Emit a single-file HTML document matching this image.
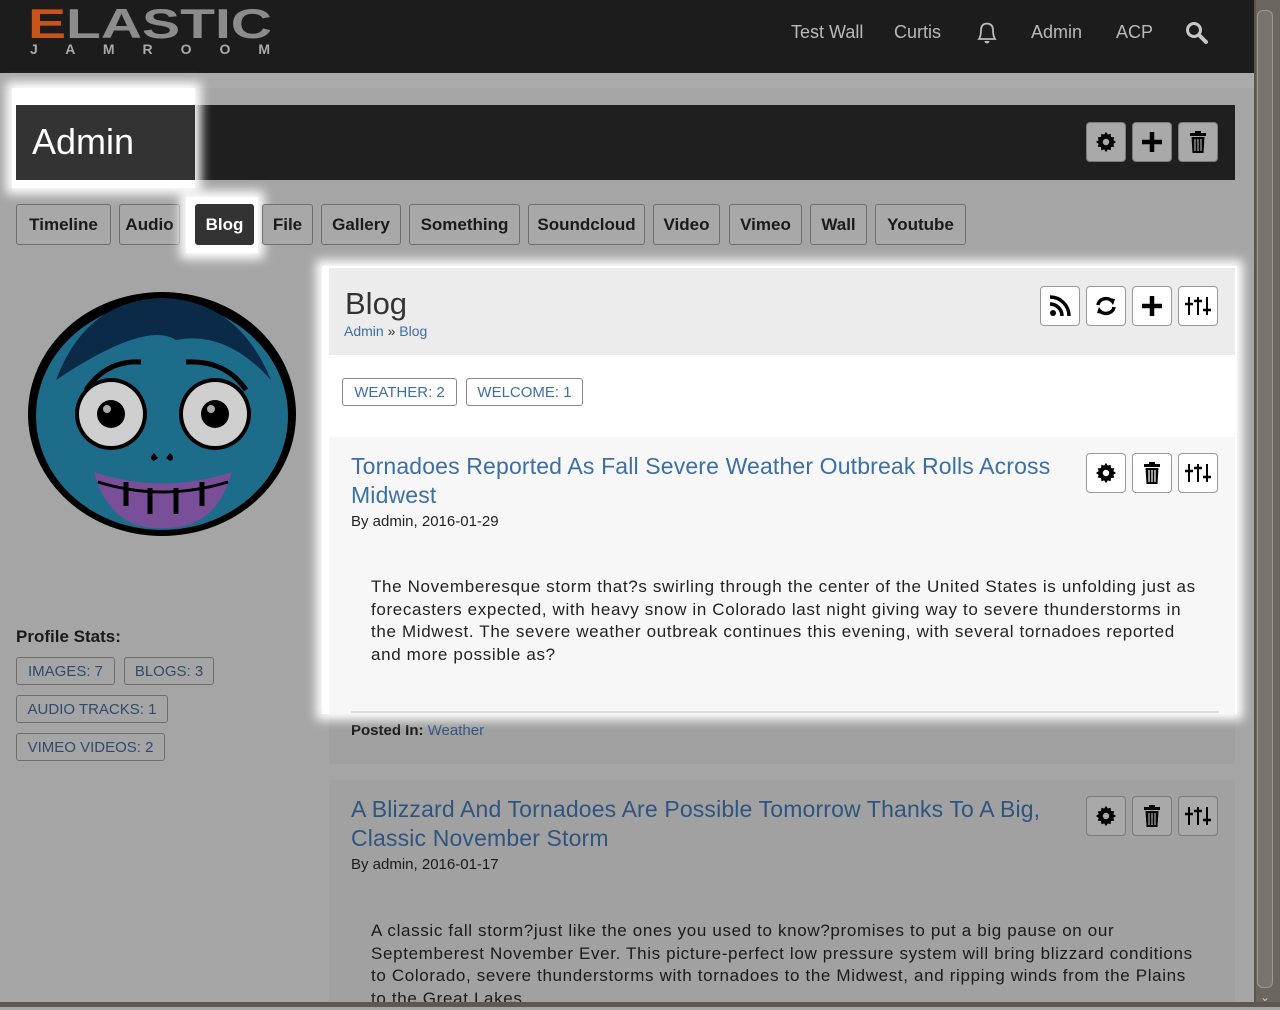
<!DOCTYPE html>
<html><head><meta charset="utf-8">
<style>
*{box-sizing:border-box;margin:0;padding:0}
body{width:1280px;height:1007px;overflow:hidden;background:#a5a5a5;font-family:"Liberation Sans",Arial,sans-serif;position:relative;color:#1a1a1a}
.a{position:absolute}
.nw{white-space:nowrap}
#hdr{left:0;top:0;width:1254px;height:73px;background:#1c1c1c}
.nav{top:22px;font-size:18px;color:#b9b9b9}
.btn{position:absolute;width:40px;height:40px;border:1px solid #7a7a7a;border-radius:4px;background:#a9a9a9;display:flex;align-items:center;justify-content:center}
.btnw{background:#fff;border-color:#9a9a9a}
.tab{position:absolute;top:204px;height:41px;border:1px solid #6e6e6e;border-radius:3px;background:#a8a8a8;font-size:17px;font-weight:bold;color:#1a1a1a;display:flex;align-items:center;justify-content:center}
.stat{position:absolute;height:28px;border:1px solid #6e6e6e;border-radius:3px;font-size:15px;color:#2f4a6a;display:flex;align-items:center;justify-content:center}
.hl{position:absolute;box-shadow:0 0 10px 6px #fff;overflow:hidden}
.ttl{font-size:23px;color:#3b6fa6;line-height:29px;letter-spacing:.15px}
.body16{font-size:17px;line-height:22.5px;color:#222;white-space:nowrap;letter-spacing:.65px}
</style></head><body>

<div id="hdr" class="a"></div>
<svg class="a" style="left:26px;top:2px" width="250" height="56" viewBox="0 0 250 56">
<text x="2" y="36" font-family="Liberation Sans" font-weight="bold" font-size="42" fill="#8c8c8c" textLength="244" lengthAdjust="spacingAndGlyphs"><tspan fill="#c9541a">E</tspan>LASTIC</text>
<text x="4" y="52" font-family="Liberation Sans" font-weight="bold" font-size="14" fill="#aaa" textLength="240">J A M R O O M</text>
</svg>
<div class="a nav" style="left:791px">Test Wall</div>
<div class="a nav" style="left:894px">Curtis</div>
<svg class="a" style="left:975px;top:20px" width="24" height="26" viewBox="0 0 24 26"><path d="M4 19 Q6 16 6 10 Q6 4 12 3.5 Q18 4 18 10 Q18 16 20 19 Z" fill="none" stroke="#bbb" stroke-width="1.8"/><path d="M9.5 21 a2.5 2.5 0 0 0 5 0" fill="#bbb"/></svg>
<div class="a nav" style="left:1031px">Admin</div>
<div class="a nav" style="left:1116px">ACP</div>
<svg class="a" style="left:1184px;top:20px" width="26" height="26" viewBox="0 0 26 26"><circle cx="10" cy="10" r="6.5" fill="none" stroke="#c8c8c8" stroke-width="3"/><path d="M15 15 L22 22" stroke="#c8c8c8" stroke-width="4" stroke-linecap="round"/></svg>
<div class="a" style="left:0;top:73px;width:1254px;height:15px;background:#aaa"></div>

<!-- admin bar (dim) -->
<div class="a" style="left:16px;top:105px;width:1219px;height:75px;background:#1f1f1f"></div>
<div class="btn" style="left:1086px;top:122px"><svg width="22" height="22" viewBox="0 0 24 24"><path fill="#000" d="M12 1l2 3 3-1 .5 3.5 3.5.5-1 3 3 2-3 2 1 3-3.5.5L17 21l-3-1-2 3-2-3-3 1-.5-3.5L3 17l1-3-3-2 3-2-1-3 3.5-.5L7 3l3 1z"/><circle cx="12" cy="12" r="3.5" fill="#a9a9a9"/></svg></div>
<div class="btn" style="left:1132px;top:122px"><svg width="24" height="24"><path d="M12 2v20M2 12h20" stroke="#000" stroke-width="4.5"/></svg></div>
<div class="btn" style="left:1178px;top:122px"><svg width="18" height="22" viewBox="0 0 18 22"><rect x="1" y="2" width="16" height="3" fill="#000"/><rect x="6" y="0" width="6" height="3" fill="#000"/><path d="M2.5 6h13l-1 16h-11z" fill="#000"/><path d="M6 8v12M9 8v12M12 8v12" stroke="#a9a9a9" stroke-width="1.2"/></svg></div>

<div class="hl" style="left:12px;top:88px;width:183px;height:100px;background:#fff">
  <div class="a" style="left:4px;top:17px;width:200px;height:75px;background:#333"></div>
  <div class="a" style="left:20px;top:33px;font-size:36px;color:#fff">Admin</div>
</div>

<!-- tabs -->
<div class="tab" style="left:16px;width:95px">Timeline</div>
<div class="tab" style="left:119px;width:61px">Audio</div>
<div class="hl" style="left:186px;top:197px;width:72px;height:56px;background:#fff"><div class="tab" style="left:9px;top:7px;width:59px;background:#333;color:#fff;border-color:#333">Blog</div></div>
<div class="tab" style="left:262px;width:51px">File</div>
<div class="tab" style="left:321px;width:80px">Gallery</div>
<div class="tab" style="left:409px;width:111px">Something</div>
<div class="tab" style="left:528px;width:117px">Soundcloud</div>
<div class="tab" style="left:653px;width:67px">Video</div>
<div class="tab" style="left:729px;width:73px">Vimeo</div>
<div class="tab" style="left:810px;width:57px">Wall</div>
<div class="tab" style="left:875px;width:91px">Youtube</div>

<!-- avatar -->
<svg class="a" style="left:26px;top:290px" width="274" height="250" viewBox="0 0 274 250">
<ellipse cx="136" cy="124" rx="134" ry="122" fill="#000"/>
<ellipse cx="136" cy="126" rx="126" ry="114" fill="#1d6c8a"/>
<path d="M30 90 Q60 10 136 8 Q212 10 245 90 Q200 40 150 50 Q120 30 30 90Z" fill="#0a2a48"/>
<path d="M60 100 Q80 70 115 72" stroke="#000" stroke-width="5" fill="none"/>
<path d="M160 72 Q200 70 220 100" stroke="#000" stroke-width="5" fill="none"/>
<circle cx="85" cy="124" r="36" fill="#000"/><circle cx="85" cy="124" r="32" fill="#cfcfcf"/><circle cx="85" cy="124" r="14" fill="#000"/><circle cx="81" cy="119" r="4" fill="#aaa"/>
<circle cx="189" cy="124" r="36" fill="#000"/><circle cx="189" cy="124" r="32" fill="#cfcfcf"/><circle cx="189" cy="124" r="14" fill="#000"/><circle cx="185" cy="119" r="4" fill="#aaa"/>
<path d="M128 163 q-6 6 0 8 l4-3z M144 163 q6 6 0 8 l-4-3z" fill="#000"/>
<path d="M68 182 Q136 205 206 182 Q190 240 136 238 Q84 240 68 182Z" fill="#7a4f9a"/>
<path d="M72 192 Q136 212 202 192" stroke="#000" stroke-width="3" fill="none"/>
<path d="M100 192v24M124 198v26M150 198v26M176 192v24" stroke="#000" stroke-width="5"/>
</svg>

<div class="a" style="left:16px;top:627px;font-size:17px;font-weight:bold;color:#1a1a1a">Profile Stats:</div>
<div class="stat" style="left:16px;top:657px;width:99px">IMAGES: 7</div>
<div class="stat" style="left:124px;top:657px;width:90px">BLOGS: 3</div>
<div class="stat" style="left:16px;top:695px;width:152px">AUDIO TRACKS: 1</div>
<div class="stat" style="left:16px;top:733px;width:149px">VIMEO VIDEOS: 2</div>

<!-- dimmed lower main -->
<div class="a" style="left:329px;top:700px;width:906px;height:64px;background:#a0a0a0"></div>
<div class="a" style="left:351px;top:722px;font-size:15px;font-weight:bold;color:#1a1a1a">Posted In: <span style="font-weight:normal;color:#2f5480">Weather</span></div>
<div class="a" style="left:329px;top:780px;width:906px;height:227px;background:#a1a1a1"></div>
<div class="a ttl nw" style="left:351px;top:795px;color:#2f5480">A Blizzard And Tornadoes Are Possible Tomorrow Thanks To A Big,<br>Classic November Storm</div>
<div class="a" style="left:351px;top:856px;font-size:15px;color:#1a1a1a">By admin, 2016-01-17</div>
<div class="btn" style="left:1086px;top:796px"><svg width="22" height="22" viewBox="0 0 24 24"><path fill="#000" d="M12 1l2 3 3-1 .5 3.5 3.5.5-1 3 3 2-3 2 1 3-3.5.5L17 21l-3-1-2 3-2-3-3 1-.5-3.5L3 17l1-3-3-2 3-2-1-3 3.5-.5L7 3l3 1z"/><circle cx="12" cy="12" r="3.5" fill="#a9a9a9"/></svg></div>
<div class="btn" style="left:1132px;top:796px"><svg width="18" height="22" viewBox="0 0 18 22"><rect x="1" y="2" width="16" height="3" fill="#000"/><rect x="6" y="0" width="6" height="3" fill="#000"/><path d="M2.5 6h13l-1 16h-11z" fill="#000"/><path d="M6 8v12M9 8v12M12 8v12" stroke="#a9a9a9" stroke-width="1.2"/></svg></div>
<div class="btn" style="left:1178px;top:796px"><svg width="26" height="22" viewBox="0 0 26 22"><path d="M4 2v18M13 2v18M22 2v18" stroke="#000" stroke-width="2"/><path d="M0 9h8M9 6h8M18 15h8" stroke="#000" stroke-width="2.5"/></svg></div>
<div class="a body16" style="left:371px;top:920px;color:#1a1a1a">A classic fall storm?just like the ones you used to know?promises to put a big pause on our<br>Septemberest November Ever. This picture-perfect low pressure system will bring blizzard conditions<br>to Colorado, severe thunderstorms with tornadoes to the Midwest, and ripping winds from the Plains<br>to the Great Lakes</div>

<!-- highlighted blog area -->
<div class="hl" style="left:322px;top:266px;width:915px;height:448px;background:#fff">
  <div class="a" style="left:7px;top:2px;width:906px;height:87px;background:#ececec"></div>
  <div class="a" style="left:23px;top:20px;font-size:31px;color:#333">Blog</div>
  <div class="a" style="left:22px;top:57px;font-size:14px;color:#3b6fa6">Admin <span style="color:#333">»</span> Blog</div>
  <div class="btn btnw" style="left:718px;top:20px"><svg width="22" height="22" viewBox="0 0 22 22"><circle cx="4" cy="18" r="3" fill="#000"/><path d="M1 9a12 12 0 0 1 12 12M1 2a19 19 0 0 1 19 19" stroke="#000" stroke-width="3.5" fill="none"/></svg></div>
  <div class="btn btnw" style="left:764px;top:20px"><svg width="22" height="22" viewBox="0 0 22 22"><path d="M3 10a8 7 0 0 1 14-4" stroke="#000" stroke-width="3.5" fill="none"/><path d="M13 3l7 1-2 6z" fill="#000"/><path d="M19 12a8 7 0 0 1-14 4" stroke="#000" stroke-width="3.5" fill="none"/><path d="M9 19l-7-1 2-6z" fill="#000"/></svg></div>
  <div class="btn btnw" style="left:810px;top:20px"><svg width="24" height="24"><path d="M12 2v20M2 12h20" stroke="#000" stroke-width="4.5"/></svg></div>
  <div class="btn btnw" style="left:856px;top:20px"><svg width="26" height="22" viewBox="0 0 26 22"><path d="M4 2v18M13 2v18M22 2v18" stroke="#000" stroke-width="2"/><path d="M0 9h8M9 6h8M18 15h8" stroke="#000" stroke-width="2.5"/></svg></div>
  <div class="stat" style="left:20px;top:112px;width:115px;color:#3b6fa6;border-color:#888;background:#fff">WEATHER: 2</div>
  <div class="stat" style="left:144px;top:112px;width:117px;color:#3b6fa6;border-color:#888;background:#fff">WELCOME: 1</div>
  <div class="a" style="left:7px;top:171px;width:906px;height:290px;background:#f7f7f7"></div>
  <div class="a ttl nw" style="left:29px;top:186px">Tornadoes Reported As Fall Severe Weather Outbreak Rolls Across<br>Midwest</div>
  <div class="a" style="left:29px;top:247px;font-size:15px;color:#222">By admin, 2016-01-29</div>
  <div class="btn btnw" style="left:764px;top:187px"><svg width="22" height="22" viewBox="0 0 24 24"><path fill="#000" d="M12 1l2 3 3-1 .5 3.5 3.5.5-1 3 3 2-3 2 1 3-3.5.5L17 21l-3-1-2 3-2-3-3 1-.5-3.5L3 17l1-3-3-2 3-2-1-3 3.5-.5L7 3l3 1z"/><circle cx="12" cy="12" r="3.5" fill="#fff"/></svg></div>
  <div class="btn btnw" style="left:810px;top:187px"><svg width="18" height="22" viewBox="0 0 18 22"><rect x="1" y="2" width="16" height="3" fill="#000"/><rect x="6" y="0" width="6" height="3" fill="#000"/><path d="M2.5 6h13l-1 16h-11z" fill="#000"/><path d="M6 8v12M9 8v12M12 8v12" stroke="#fff" stroke-width="1.2"/></svg></div>
  <div class="btn btnw" style="left:856px;top:187px"><svg width="26" height="22" viewBox="0 0 26 22"><path d="M4 2v18M13 2v18M22 2v18" stroke="#000" stroke-width="2"/><path d="M0 9h8M9 6h8M18 15h8" stroke="#000" stroke-width="2.5"/></svg></div>
  <div class="a body16" style="left:49px;top:310px">The Novemberesque storm that?s swirling through the center of the United States is unfolding just as<br>forecasters expected, with heavy snow in Colorado last night giving way to severe thunderstorms in<br>the Midwest. The severe weather outbreak continues this evening, with several tornadoes reported<br>and more possible as?</div>
  <div class="a" style="left:29px;top:445px;width:868px;height:2px;background:#ddd"></div>
</div>

<!-- scrollbar & frame -->
<div class="a" style="left:1254px;top:0;width:26px;height:1007px;background:#6c6661;border-left:2px solid #5a5550"></div>
<div class="a" style="left:1257px;top:10px;width:16px;height:978px;background:#7a746f;border:1px solid #9d9994;border-radius:6px"></div>
<div class="a" style="left:1260px;top:990px;font-size:12px;color:#ccc">⌄</div>
<div class="a" style="left:0;top:1002px;width:1280px;height:5px;background:#5e5852"></div>
</body></html>
